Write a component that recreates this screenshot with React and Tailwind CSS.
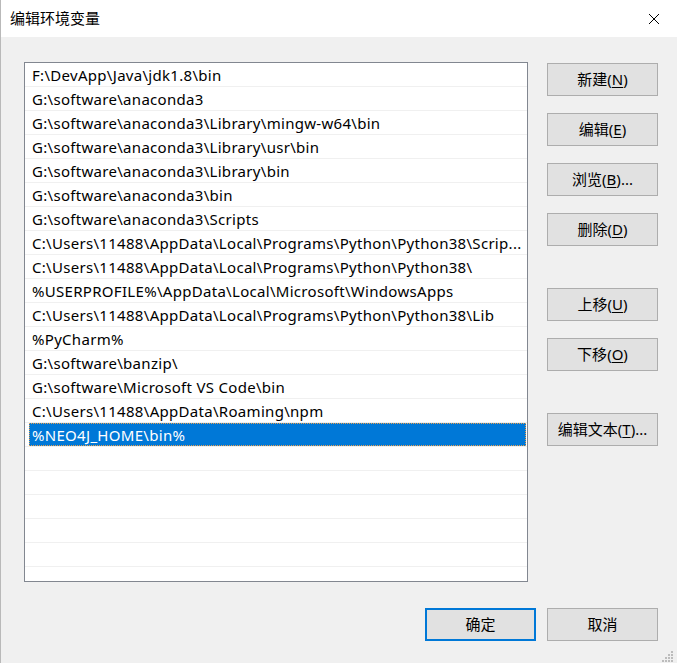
import React from "react";

const rows = [
  "F:\\DevApp\\Java\\jdk1.8\\bin",
  "G:\\software\\anaconda3",
  "G:\\software\\anaconda3\\Library\\mingw-w64\\bin",
  "G:\\software\\anaconda3\\Library\\usr\\bin",
  "G:\\software\\anaconda3\\Library\\bin",
  "G:\\software\\anaconda3\\bin",
  "G:\\software\\anaconda3\\Scripts",
  "C:\\Users\\11488\\AppData\\Local\\Programs\\Python\\Python38\\Scrip...",
  "C:\\Users\\11488\\AppData\\Local\\Programs\\Python\\Python38\\",
  "%USERPROFILE%\\AppData\\Local\\Microsoft\\WindowsApps",
  "C:\\Users\\11488\\AppData\\Local\\Programs\\Python\\Python38\\Lib",
  "%PyCharm%",
  "G:\\software\\banzip\\",
  "G:\\software\\Microsoft VS Code\\bin",
  "C:\\Users\\11488\\AppData\\Roaming\\npm",
];

const font = {
  fontFamily:
    '"Noto Sans", "Noto Sans CJK SC", sans-serif',
};

function Btn({ label, acc, suffix = "", primary = false, className = "" }) {
  return (
    <div
      className={
        "w-[111px] h-[33px] flex items-center justify-center bg-[#e1e1e1] text-[15px] text-black leading-none " +
        (primary ? "border-2 border-[#0078d7] " : "border border-[#adadad] ") +
        className
      }
    >
      <span>
        {label}
        {acc && (
          <>
            (<span className="underline underline-offset-2">{acc}</span>)
          </>
        )}
        {suffix}
      </span>
    </div>
  );
}

export default function App() {
  const empties = [0, 1, 2, 3, 4, 5];
  return (
    <div
      className="w-[677px] h-[663px] bg-[#f0f0f0] flex flex-col relative overflow-hidden border-l border-[#b9b9b9]"
      style={font}
    >
      {/* title bar */}
      <div className="h-[37px] bg-white flex items-center pl-[9px] pr-[16px] justify-between shrink-0">
        <span className="text-[15px] text-black">编辑环境变量</span>
        <svg width="12" height="12" viewBox="0 0 12 12" className="mr-[1px]">
          <path d="M1 1 L11 11 M11 1 L1 11" stroke="#000" strokeWidth="1" />
        </svg>
      </div>

      {/* body */}
      <div className="flex pl-[23px] pt-[25px]">
        <div className="w-[504px] h-[520px] border border-[#828790] bg-white overflow-hidden">
          {rows.map((r, i) => (
            <div
              key={i}
              className="h-[24px] border-b border-[#f0f0f0] flex items-center pl-[7px] pt-[2px] text-[15px] text-black whitespace-nowrap leading-none"
            >
              <span className="tracking-[0.3px]">{r}</span>
            </div>
          ))}
          <div className="h-[24px] border-b border-[#f0f0f0] flex items-stretch pl-[4px] pr-[1px]">
            <div className="flex-1 bg-[#0078d7] border border-dotted border-[#e8a050] flex items-center pl-[2px] pt-[2px] text-[15px] text-white leading-none whitespace-nowrap">
              <span className="tracking-[0.3px]">%NEO4J_HOME\bin%</span>
            </div>
          </div>
          {empties.map((e) => (
            <div key={e} className="h-[24px] border-b border-[#f0f0f0]" />
          ))}
        </div>

        <div className="flex flex-col ml-[19px] pt-[1px]">
          <Btn label="新建" acc="N" />
          <Btn label="编辑" acc="E" className="mt-[17px]" />
          <Btn label="浏览" acc="B" suffix="..." className="mt-[17px]" />
          <Btn label="删除" acc="D" className="mt-[17px]" />
          <Btn label="上移" acc="U" className="mt-[42px]" />
          <Btn label="下移" acc="O" className="mt-[17px]" />
          <Btn label="编辑文本" acc="T" suffix="..." className="mt-[42px]" />
        </div>
      </div>

      <div className="flex justify-end pr-[19px] mt-[26px] gap-[11px]">
        <Btn label="确定" primary />
        <Btn label="取消" />
      </div>

      {/* resize grip */}
      <svg
        width="12"
        height="12"
        viewBox="0 0 12 12"
        className="absolute right-[3px] bottom-[1px]"
      >
        {[
          [9, 1],
          [6, 4],
          [9, 4],
          [3, 7],
          [6, 7],
          [9, 7],
          [0, 10],
          [3, 10],
          [6, 10],
          [9, 10],
        ].map(([x, y], i) => (
          <rect key={i} x={x} y={y} width="2" height="2" fill="#bcbcbc" />
        ))}
      </svg>
    </div>
  );
}
